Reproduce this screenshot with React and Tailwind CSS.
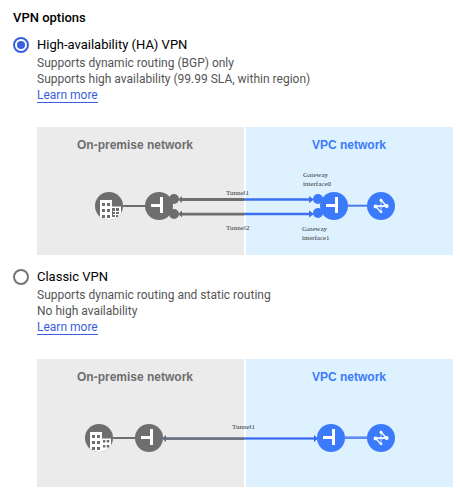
import React, { useId } from "react";

const GRAY = "#6e6e6e";
const BLUE = "#3b7bfb";

const ANNEX_WINDOWS = "M4 2h2.3v2.5h-2.3zM7.7 2h2.5v2.5h-2.5zM4 7h2.3v2.5h-2.3zM7.7 7h2.5v2.5h-2.5z";
const ANNEX_WINDOWS_WIDE = "M3 2h3v3h-3zM7 2h3v3h-3zM4 6h2v2h-2zM7 6h3v2h-3zM3 9h3v2h-3zM7 9h2v2h-2zM3 2h1v9h-1z";

function Building({ x, annex = ANNEX_WINDOWS }) {
  const clip = useId();
  return (
    <g transform={`translate(${x} 79)`}>
      <clipPath id={clip}>
        <circle r="14" />
      </clipPath>
      <circle r="14" fill={GRAY} />
      <g clipPath={`url(#${clip})`}>
        <path fill="#fff" d="M-9-6H3V.5H12V14H-9Z" />
        <path
          fill={GRAY}
          d="M-7-3h3v3h-3zM-2-3h3v3h-3zM-7 3h3v3h-3zM-2 3h3v3h-3zM-7 9h3v3h-3zM-2 9h3v3h-3z"
        />
        <path fill={GRAY} d={annex} />
      </g>
    </g>
  );
}

function Gateway({ x, color }) {
  return (
    <g transform={`translate(${x} 79)`}>
      <circle r="14" fill={color} />
      <path fill="#fff" d="M1-9h3V7H1V1H-8V-2H1z" />
    </g>
  );
}

function NetworkNode() {
  return (
    <g transform="translate(344 79)">
      <circle r="14" fill={BLUE} />
      <path d="M0-6V6" fill="none" stroke="#fff" strokeOpacity="0.45" strokeWidth="1.4" />
      <path d="M0-6L5.5 0M-5.5.5L0 6" fill="none" stroke="#fff" strokeWidth="1.3" />
      <path d="M-5.5.3L5.5 0" stroke="#fff" strokeOpacity="0.9" strokeWidth="2" />
      <circle cx="0" cy="-5.8" r="1.4" fill="#fff" />
      <circle cx="0" cy="5.8" r="1.4" fill="#fff" />
      <circle cx="-5.5" cy=".4" r="1.9" fill="#fff" />
      <circle cx="5.7" cy="0" r="1.9" fill="#fff" />
    </g>
  );
}

function Diagram({ children }) {
  return (
    <div className="relative mt-6 flex h-32 w-[416px] gap-0.5 font-['Liberation_Sans',Arial,sans-serif] text-[12px] leading-[14px] font-bold">
      <div className="w-[207px] bg-[#ebebeb] pt-[11px] pl-10 text-[#6e6e6e]">
        <span className="whitespace-nowrap">On-premise network</span>
      </div>
      <div className="w-[207px] bg-[#def1ff] pt-[11px] pl-[66px] text-[#3b7bfb]">
        <span className="whitespace-nowrap">VPC network</span>
      </div>
      <svg className="absolute inset-0" width="416" height="128" viewBox="0 0 416 128">
        {children}
      </svg>
    </div>
  );
}

function Label({ x, y, width, children }) {
  return (
    <text
      x={x}
      y={y}
      textLength={width}
      fill="#333"
      fontWeight="400"
      fontSize="7"
      fontFamily="'Liberation Serif', 'Times New Roman', serif"
    >
      {children}
    </text>
  );
}

function HaDiagram() {
  return (
    <Diagram>
      <path d="M86 79H110" stroke={GRAY} strokeWidth="2" />
      <path d="M310 78.7H331" stroke="#4a78e6" strokeWidth="2" />
      <path d="M144 72.5H207M144 87.1H207" stroke={GRAY} strokeWidth="2.8" />
      <path d="M207 72.5H274M207 87H274" stroke="#3b70f2" strokeWidth="2.6" />
      <path d="M141 72.5l4-3.5v7zM141 87.1l4-3.5v7z" fill={GRAY} />
      <path d="M277 72.5l-5-3.5v7zM277 87l-5-3.5v7z" fill="#3b70f2" />
      <circle cx="137" cy="72" r="5" fill={GRAY} />
      <circle cx="137" cy="87" r="5" fill={GRAY} />
      <circle cx="281" cy="72" r="5" fill={BLUE} />
      <circle cx="281" cy="86" r="5" fill={BLUE} />
      <Building x={72} annex={ANNEX_WINDOWS_WIDE} />
      <Gateway x={122} color={GRAY} />
      <Gateway x={297} color={BLUE} />
      <NetworkNode />
      <Label x={189} y={68} width={23}>Tunnel1</Label>
      <Label x={189} y={103} width={23.5}>Tunnel2</Label>
      <Label x={266} y={50} width={25}>Gateway</Label>
      <Label x={266} y={59} width={28}>interface0</Label>
      <Label x={265} y={104} width={25}>Gateway</Label>
      <Label x={265} y={113} width={27.5}>interface1</Label>
    </Diagram>
  );
}

function ClassicDiagram() {
  return (
    <Diagram>
      <path d="M76 79H100" stroke={GRAY} strokeWidth="2" />
      <path d="M308 78.7H331" stroke="#5f8cf0" strokeWidth="2.6" />
      <path d="M129 79.5H207" stroke="#85899f" strokeWidth="3" />
      <path d="M129 79.8H207" stroke="#6b6d75" strokeWidth="1.6" />
      <path d="M207 79.5H278" stroke="#91b5fb" strokeWidth="3" />
      <path d="M207 79.5H278" stroke="#3668ec" strokeWidth="1.6" />
      <path d="M125 79.5l4-3.5v7z" fill="#666b80" />
      <path d="M281 79.5l-4-3.5v7z" fill="#3668ec" />
      <Building x={62} />
      <Gateway x={112} color={GRAY} />
      <Gateway x={294} color={BLUE} />
      <NetworkNode />
      <Label x={195} y={70} width={23}>Tunnel1</Label>
    </Diagram>
  );
}

function Option({ title, lines, checked, children }) {
  return (
    <div className="flex gap-2">
      <span
        role="radio"
        aria-checked={checked}
        className={
          checked
            ? "flex size-4 shrink-0 items-center justify-center rounded-full border-2 border-[#3b5fe0]"
            : "flex size-4 shrink-0 items-center justify-center rounded-full border-2 border-[#757575]"
        }
      >
        {checked && <span className="size-2 rounded-full bg-[#3b5fe0]" />}
      </span>
      <div className="flex flex-col items-start">
        <div className="text-[13px] leading-4 text-black">{title}</div>
        <div className="mt-0.5 text-[12px] leading-4 text-[#555]">
          {lines.map((line) => (
            <div key={line} className="whitespace-nowrap">{line}</div>
          ))}
        </div>
        <a className="h-4 border-b border-[#3b5fe0] text-[12px] leading-4 text-[#3b5fe0]">Learn more</a>
        {children}
      </div>
    </div>
  );
}

export default function App() {
  return (
    <main className="h-[501px] w-[462px] overflow-hidden bg-white pt-2.5 pl-[13px] font-[Roboto,sans-serif]">
      <h1 className="mb-[11px] text-[13px] leading-4 font-medium text-black">VPN options</h1>
      <div className="flex flex-col gap-3.5" role="radiogroup">
        <Option
          checked
          title="High-availability (HA) VPN"
          lines={["Supports dynamic routing (BGP) only", "Supports high availability (99.99 SLA, within region)"]}
        >
          <HaDiagram />
        </Option>
        <Option
          checked={false}
          title="Classic VPN"
          lines={["Supports dynamic routing and static routing", "No high availability"]}
        >
          <ClassicDiagram />
        </Option>
      </div>
    </main>
  );
}
